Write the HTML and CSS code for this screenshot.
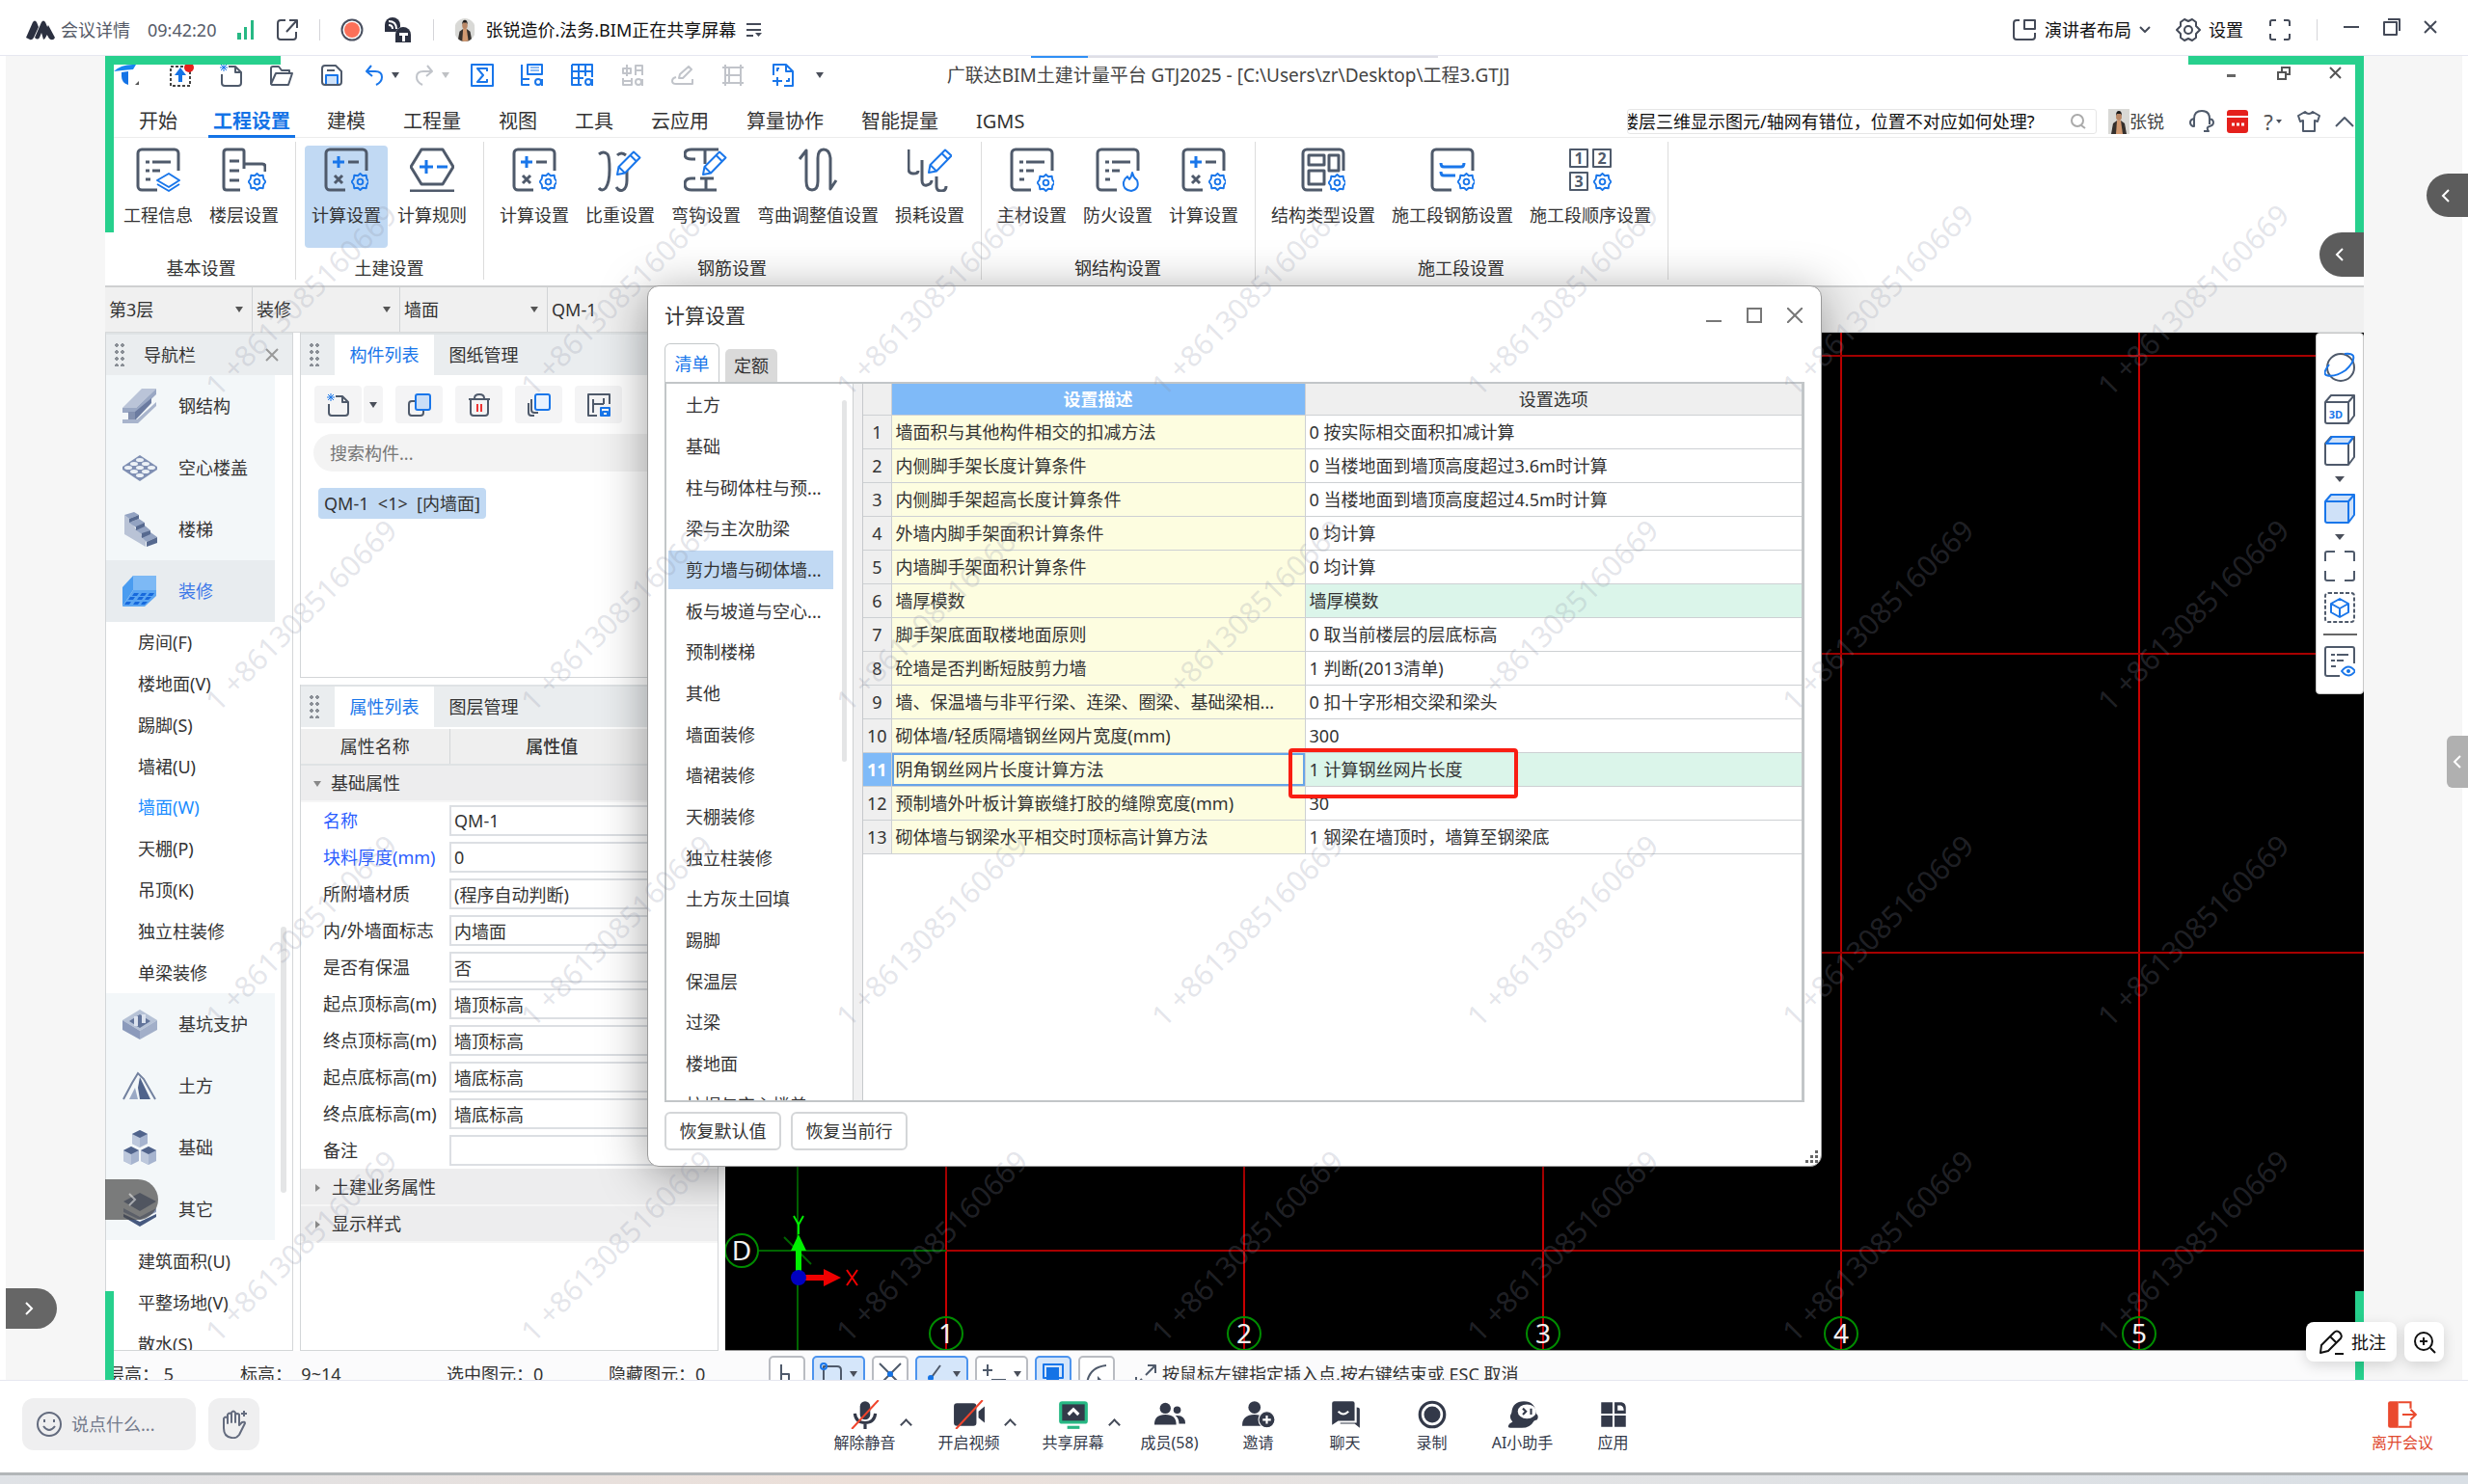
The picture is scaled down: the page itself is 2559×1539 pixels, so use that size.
FILE: index.html
```html
<!DOCTYPE html>
<html lang="zh-CN">
<head>
<meta charset="utf-8">
<title>会议 - 共享屏幕</title>
<link rel="stylesheet" href="styles.css">
</head>
<body>
<svg class="defs" aria-hidden="true">
  <defs>
    <symbol id="gear" viewBox="0 0 20 20"><path class="b2" d="M10 1l2.6 2.4 3.9-.5.6 3.9L19.4 10l-2.3 3.2-.6 3.9-3.9-.5L10 19l-2.6-2.4-3.9.5-.6-3.9L.6 10l2.3-3.2.6-3.9 3.9.5z"/><circle class="b2" cx="10" cy="10" r="3"/></symbol>
    <symbol id="pencil" viewBox="0 0 28 28"><path class="b2 wf" d="M2 26l1.500-8L19 2.500l6.500 6L10 24.500zM15.500 6l6.500 6.500M3.500 18l6.500 6.500"/></symbol>
    <symbol id="doc" viewBox="0 0 46 46"><path class="g3" d="M44 24V6a4 4 0 0 0-4-4H6a4 4 0 0 0-4 4v34a4 4 0 0 0 4 4h16"/></symbol>
    <symbol id="lines" viewBox="0 0 46 46"><path class="g3" d="M10 15h4M17 15h19M10 24h4M17 24h8M10 33h5"/></symbol>
    <symbol id="calc" viewBox="0 0 46 46"><use href="#doc"/><path class="g3" d="M25 15h11M11 29l8 8M19 29l-8 8"/><path class="b3" d="M9 15h12M15 9v12"/><use href="#gear" x="28" y="26" width="19" height="19"/></symbol>
    <symbol id="cube" viewBox="0 0 32 32"><path class="g2" d="M1 9h24v22H3a2 2 0 0 1-2-2zM1 9l6-7h24v21l-6 8M25 9l6-7"/></symbol>
    <symbol id="page" viewBox="0 0 24 24"><path class="g2" d="M9 3h7l6 6v11a3 3 0 0 1-3 3H5a3 3 0 0 1-3-3v-9M16 3v6h6"/><path class="b1" d="M1 1l6 6M7 1L1 7M4 0v8M0 4h8"/></symbol>
    <symbol id="full" viewBox="0 0 24 24"><path class="m2" d="M2 8V4a2 2 0 0 1 2-2h4M16 2h4a2 2 0 0 1 2 2v4M22 16v4a2 2 0 0 1-2 2h-4M8 22H4a2 2 0 0 1-2-2v-4"/></symbol>
    <symbol id="person" viewBox="0 0 22 26"><rect width="22" height="26" fill="#d9d9d6"/><path d="M3 26l2-11 4-3h4l4 3 2 11z" fill="#35302d"/><path d="M8 26l1-14h4l2 14z" fill="#d19a72"/><ellipse cx="11" cy="8" rx="3" ry="4" fill="#b98766"/><path d="M8 7q0-5 3-5t3 5l-1-2h-4z" fill="#1c1a1a"/></symbol>
  </defs>
</svg>

<header class="meeting-top">
  <div class="mt-group">
    <button class="plain brand"><svg width="30" height="22" viewBox="0 0 30 22"><path d="M0 19L7 3q2-3 4 0l2 5-5 11q-2 3-4 2zM9 19l7-16q2-3 4 0l3 7q-1 9-5 11l-2-7-2 5q-2 3-5 0zM20 13l3-7 7 13q-2 4-6 1z" fill="#2b3040"/></svg><span class="muted">会议详情</span></button>
    <span class="clock">09:42:20</span>
    <svg width="20" height="20" viewBox="0 0 20 20"><path d="M1 13h4v7H1zM8 7h3v13H8zM15 0h3v20h-3z" fill="#27b884"/></svg>
    <button class="plain" aria-label="弹出窗口"><svg width="24" height="24" viewBox="0 0 24 24"><path class="m2" d="M10 2H5a3 3 0 0 0-3 3v14a3 3 0 0 0 3 3h13a3 3 0 0 0 3-3v-5M14 2h8v8M21 3L11 14"/></svg></button>
    <span class="vr"></span>
    <button class="plain" aria-label="录制中"><svg width="24" height="24" viewBox="0 0 24 24"><circle cx="12" cy="12" r="10.500" fill="none" stroke="#4a5060" stroke-width="2"/><circle cx="12" cy="12" r="8" fill="#fb7059"/></svg></button>
    <button class="plain" aria-label="字幕"><svg width="30" height="28" viewBox="0 0 30 28"><path d="M1 9a8 8 0 0 1 16 0v7H1z" fill="#2b3040"/><circle cx="21" cy="19" r="9" fill="#fff"/><path d="M12 27v-8a8 8 0 0 1 16 0v8z" fill="#2b3040"/><path d="M5 5q8 0 8 8M5 9q4 0 4 4" fill="none" stroke="#fff" stroke-width="2"/><path d="M16 17h9v3h-3v6h-3v-6h-3z" fill="#fff"/></svg></button>
    <span class="vr"></span>
    <button class="plain sharing"><svg class="round" width="22" height="24"><use href="#person"/></svg><span>张锐造价.法务.BIM正在共享屏幕</span><svg width="18" height="16" viewBox="0 0 18 16"><path class="m2" d="M1 2h15M1 8h15M1 14h7"/><path d="M10 11h7l-3.500 4z" fill="#444a58"/></svg></button>
  </div>
  <div class="mt-group right">
    <button class="plain"><svg width="26" height="24" viewBox="0 0 26 24"><path class="m2" d="M8 2H5a3 3 0 0 0-3 3v14a3 3 0 0 0 3 3h16a3 3 0 0 0 3-3v-4M13 2h11v9H13z"/></svg><span>演讲者布局</span><svg width="12" height="10" viewBox="0 0 12 10"><path class="m2" d="M1 2l5 5 5-5"/></svg></button>
    <button class="plain"><svg width="26" height="26" viewBox="0 0 26 26"><path class="m2" d="M9 2l4 2 4-2 4 3v4l4 4-4 4v4l-4 3-4-2-4 2-4-3v-4l-4-4 4-4V5z"/><circle class="m2" cx="13" cy="13" r="4"/></svg><span>设置</span></button>
    <button class="plain" aria-label="全屏"><svg width="24" height="24"><use href="#full"/></svg></button>
    <span class="vr"></span>
    <div class="wins">
    <button class="plain" aria-label="最小化"><svg width="18" height="18" viewBox="0 0 18 18"><path class="m2" d="M1 9h16"/></svg></button>
    <button class="plain" aria-label="还原"><svg width="18" height="18" viewBox="0 0 18 18"><path class="m2" d="M1 4h13v13H1zM5 1h12v12"/></svg></button>
    <button class="plain" aria-label="关闭"><svg width="14" height="14" viewBox="0 0 14 14"><path class="m2" d="M1 1l12 12M13 1L1 13"/></svg></button>
    </div>
  </div>
</header>

<main class="stage">
 <section class="share">
  <div class="titlebar">
    <div class="quick">
      <span class="logo"><svg width="28" height="24" viewBox="0 0 28 24"><path d="M0 8Q8 0 23 1L20 6 9 7z" fill="#1685f0"/><path d="M8 9l7-1v14q-7-2-7-9z" fill="#1473e6"/><path d="M22 22h4v-4z" fill="#555"/></svg></span>
      <button class="plain q" aria-label="升级"><svg width="26" height="26" viewBox="0 0 26 26"><rect x="2" y="4" width="20" height="20" fill="none" stroke="#444" stroke-width="2" stroke-dasharray="3 2"/><path d="M12 5l6 8h-4v7h-4v-7H6z" fill="#1473e6"/><circle cx="21" cy="5" r="5" fill="#e5201c"/></svg></button>
      <button class="plain q" aria-label="新建"><svg width="24" height="24"><use href="#page"/></svg></button>
      <button class="plain q" aria-label="打开"><svg width="24" height="22" viewBox="0 0 24 22"><path class="g2" d="M1 20V4q0-2 2-2h6l3 4h8v4M1 20l5-11h17l-4 12H2z"/></svg></button>
      <button class="plain q" aria-label="保存"><svg width="22" height="22" viewBox="0 0 22 22"><path class="g2" d="M4 1h11l6 6v11q0 3-3 3H4q-3 0-3-3V4q0-3 3-3zM6 6h8"/><path class="b2" d="M5 20v-9h12v9" fill="#cfe3fb"/></svg></button>
      <button class="plain q" aria-label="撤销"><svg width="20" height="22" viewBox="0 0 20 22"><path class="b2" d="M7 1L2 7l6 5M3 7h8q7 0 7 6 0 5-6 8"/></svg><i class="tri"></i></button>
      <button class="plain q faded" aria-label="恢复"><svg width="20" height="22" viewBox="0 0 20 22"><path class="g2" d="M13 1l5 6-6 5M17 7H9q-7 0-7 6 0 5 6 8"/></svg><i class="tri"></i></button>
      <button class="plain q" aria-label="汇总计算"><svg width="24" height="24" viewBox="0 0 24 24"><path class="b2" d="M1 1h22v22H1zM17 8V5H7l6 7-6 7h10v-3"/></svg></button>
      <button class="plain q" aria-label="查看工程量"><svg width="24" height="24" viewBox="0 0 24 24"><path class="b2" d="M1 1v21h8M1 16h8M7 1h15v10H7z"/><path class="b1" d="M10 4h9M10 7h9"/><circle class="b2" cx="18" cy="19" r="3"/><path class="b2" d="M22 16v7"/></svg></button>
      <button class="plain q" aria-label="查看报表"><svg width="24" height="24" viewBox="0 0 24 24"><path class="b2" d="M1 1h21v13M1 1v21h10M1 8h21M1 15h12M8 1v21M15 1v12"/><circle class="b2" cx="18" cy="19" r="3"/><path class="b2" d="M22 16v7"/></svg></button>
      <button class="plain q faded" aria-label="查找"><svg width="24" height="24" viewBox="0 0 24 24"><path class="g2" d="M2 5h8v5H2zM6 1v12M15 12V2h7v10M15 7h7M2 15v7h9v-7M2 18h9"/><circle class="g2" cx="18" cy="19" r="3"/><path class="g2" d="M22 16v7"/></svg></button>
      <button class="plain q faded" aria-label="编辑"><svg width="24" height="20" viewBox="0 0 24 20"><path class="g2" d="M8 13l1-4 9-8 3 3-9 9zM5 12q-4 1-4 4t4 3h17v-5"/></svg></button>
      <button class="plain q faded" aria-label="区域"><svg width="24" height="24" viewBox="0 0 24 24"><path class="g2" d="M4 1v22M20 1v22M1 4h22M1 20h22M4 12h16M8 4v16"/></svg></button>
      <button class="plain q" aria-label="导出"><svg width="24" height="24" viewBox="0 0 24 24"><path class="b2" d="M2 12V1h13l7 7v15h-9M15 1v7h7M6 14v9M1 18h10"/><path class="b2" d="M8 5H6v3M15 18h3v-3"/></svg></button>
      <i class="tri wide"></i>
    </div>
    <div class="app-title">广联达BIM土建计量平台 GTJ2025 - [C:\Users\zr\Desktop\工程3.GTJ]</div>
    <div class="app-win">
      <button class="plain" aria-label="最小化"><svg width="14" height="14" viewBox="0 0 14 14"><path d="M2 8h9v3H2z" fill="#666"/></svg></button>
      <button class="plain" aria-label="还原"><svg width="14" height="14" viewBox="0 0 14 14"><path d="M1 6h8v7H1zM5 5V1h8v7H9" fill="none" stroke="#555" stroke-width="2"/></svg></button>
      <button class="plain" aria-label="关闭"><svg width="14" height="14" viewBox="0 0 14 14"><path d="M1 1l11 11M12 1L1 12" fill="none" stroke="#555" stroke-width="2"/></svg></button>
    </div>
  </div>

  <div class="tabrow">
    <nav class="tabs">
      <a href="#">开始</a><a href="#" class="on">工程设置</a><a href="#">建模</a><a href="#">工程量</a><a href="#">视图</a><a href="#">工具</a><a href="#">云应用</a><a href="#">算量协作</a><a href="#">智能提量</a><a href="#">IGMS</a>
    </nav>
    <div class="tabtools">
      <label class="ask"><input type="text" aria-label="搜索问题" value="楼层三维显示图元/轴网有错位，位置不对应如何处理?"><svg width="16" height="16" viewBox="0 0 16 16"><circle cx="7" cy="7" r="6" fill="none" stroke="#aaa" stroke-width="2"/><path d="M11 12l4 3" stroke="#aaa" stroke-width="2"/></svg></label>
      <button class="plain user"><svg width="22" height="26"><use href="#person"/></svg>张锐</button>
      <button class="plain t" aria-label="客服"><svg width="26" height="24" viewBox="0 0 26 24"><path class="g2" d="M4 17q-3-1-3-4t4-4v8zM5 9q0-8 8-8t8 8v6M21 9q4 1 4 4t-4 4-1 5h-5"/></svg></button>
      <button class="plain t" aria-label="日历"><svg width="24" height="24" viewBox="0 0 24 24"><rect x="1" width="22" height="24" rx="3" fill="#e5201c"/><path d="M1 7h22" stroke="#fff" stroke-width="2"/><path d="M6 15h3M11 15h3M16 15h3" stroke="#fff" stroke-width="3"/></svg></button>
      <button class="plain t help">?<i class="tri sm"></i></button>
      <button class="plain t" aria-label="皮肤"><svg width="24" height="22" viewBox="0 0 24 22"><path class="g2" d="M8 1L1 5l2 6 3-1v11h12V10l3 1 2-6-7-4q-4 4-8 0z"/></svg></button>
      <button class="plain t" aria-label="收起"><svg width="22" height="14" viewBox="0 0 22 14"><path class="g2" d="M2 12l9-9 9 9"/></svg></button>
    </div>
  </div>

  <div class="ribbon">
    <div class="rgroup"><div class="rbtns">
      <button><svg viewBox="0 0 46 46"><use href="#doc"/><use href="#lines"/><path class="b2" d="M22 34l12-7 11 7-11 7zM22 38l12 7 11-7"/></svg>工程信息</button>
      <button><svg viewBox="0 0 46 46"><path class="g3" d="M23 22V4q0-2-2-2H5Q2 2 2 5v36q0 3 3 3h14M8 14h10M8 24h10M8 34h10M23 17h19q3 0 3 3v5"/><use href="#gear" x="27" y="26" width="19" height="19"/></svg>楼层设置</button>
      </div><h3>基本设置</h3></div>
    <div class="rgroup"><div class="rbtns">
      <button class="on"><svg viewBox="0 0 46 46"><use href="#calc"/></svg>计算设置</button>
      <button><svg viewBox="0 0 46 46"><path class="g3" d="M12 2h22l11 18-11 18H12L1 20z"/><path class="b3" d="M10 20h14M17 13v14M28 20h11"/><path class="g3" d="M0 45h46"/></svg>计算规则</button>
      </div><h3>土建设置</h3></div>
    <div class="rgroup"><div class="rbtns">
      <button><svg viewBox="0 0 46 46"><use href="#calc"/></svg>计算设置</button>
      <button><svg viewBox="0 0 46 46"><path class="g3" d="M1 7q5-4 9 0 2 3 2 16t-4 19q-4 4-7 0M20 8q4-4 9 0M30 22v12q0 8-4 10t-7-3"/><use href="#pencil" x="18" y="2" width="28" height="28"/></svg>比重设置</button>
      <button><svg viewBox="0 0 46 46"><path class="g3" d="M36 2H8q-7 0-7 5t7 5h4M22 3v14M12 32H8q-7 0-7 6t7 6h26M23 32v12M17 32h14"/><use href="#pencil" x="18" y="2" width="28" height="28"/></svg>弯钩设置</button>
      <button><svg viewBox="0 0 46 46"><path class="g3" d="M4 12L11 3v32q0 9 6 9t6-9V11q0-9 6-9t7 9v32l6-9"/></svg>弯曲调整值设置</button>
      <button><svg viewBox="0 0 46 46"><path class="g3" d="M1 2v20q0 5 5 5t5-3M15 13v21q0 6 5 5t5-5M30 30v10q0 5 5 5t5-5"/><use href="#pencil" x="20" y="0" width="28" height="28"/></svg>损耗设置</button>
      </div><h3>钢筋设置</h3></div>
    <div class="rgroup"><div class="rbtns">
      <button><svg viewBox="0 0 46 46"><use href="#doc"/><use href="#lines"/><use href="#gear" x="28" y="27" width="19" height="19"/></svg>主材设置</button>
      <button><svg viewBox="0 0 46 46"><use href="#doc"/><use href="#lines"/><path class="b2" d="M38 26q1 5 5 8 3 9-6 11-9-1-8-9 1-4 4-6l2 3q2-2 3-7z"/></svg>防火设置</button>
      <button><svg viewBox="0 0 46 46"><use href="#calc"/></svg>计算设置</button>
      </div><h3>钢结构设置</h3></div>
    <div class="rgroup"><div class="rbtns">
      <button><svg viewBox="0 0 46 46"><use href="#doc"/><path class="g3" d="M8 8h16v10H8zM29 8h10v16H29zM8 24h16v14H8z"/><use href="#gear" x="28" y="27" width="19" height="19"/></svg>结构类型设置</button>
      <button><svg viewBox="0 0 46 46"><use href="#doc"/><path class="b3" d="M11 16q0 4 3 4h18q3 0 3-4M11 25q0 4 3 4h12"/><use href="#gear" x="28" y="26" width="19" height="19"/></svg>施工段钢筋设置</button>
      <button><svg viewBox="0 0 46 46"><path class="g2" d="M2 2h18v18H2zM26 2h18v18H26zM2 26h18v18H2z"/><g class="n"><text x="11" y="17">1</text><text x="35" y="17">2</text><text x="11" y="41">3</text></g><use href="#gear" x="26" y="26" width="19" height="19"/></svg>施工段顺序设置</button>
      </div><h3>施工段设置</h3></div>
  </div>

  <div class="selrow">
    <label class="sel"><select aria-label="楼层"><option>第3层</option></select></label>
    <label class="sel"><select aria-label="构件类别"><option>装修</option></select></label>
    <label class="sel"><select aria-label="构件类型"><option>墙面</option></select></label>
    <label class="sel"><select aria-label="构件"><option>QM-1</option></select></label>
  </div>

  <div class="work">
    <aside class="navp">
      <div class="phead"><i class="grip"></i><span class="ptitle">导航栏</span><button class="plain" aria-label="关闭导航栏"><svg width="14" height="14" viewBox="0 0 14 14"><path d="M1 1l12 12M13 1L1 13" fill="none" stroke="#999" stroke-width="2"/></svg></button></div>
      <div class="navlist">
        <a href="#" class="cat"><svg viewBox="0 0 36 36"><path d="M0 20L20 0h15L14 20z" fill="#bac4d8"/><path d="M0 20h14L35 0v6L15 25H0z" fill="#9aa8c4"/><path d="M6 24h7v9H6z" fill="#8391b0"/><path d="M13 24L30 10v5L13 33z" fill="#6b7ba0"/><path d="M0 32h15L35 14v4L16 36H0z" fill="#a8b4cc"/></svg>钢结构</a>
        <a href="#" class="cat"><svg viewBox="0 0 36 36"><path d="M0 17L18 5l18 12v3L18 32 0 20z" fill="#7f8fb3"/><g fill="#edf2f7"><ellipse cx="18" cy="10" rx="4" ry="2"/><ellipse cx="12" cy="14" rx="4" ry="2"/><ellipse cx="24" cy="14" rx="4" ry="2"/><ellipse cx="6" cy="18" rx="4" ry="2"/><ellipse cx="18" cy="18" rx="4" ry="2"/><ellipse cx="30" cy="18" rx="4" ry="2"/><ellipse cx="12" cy="22" rx="4" ry="2"/><ellipse cx="24" cy="22" rx="4" ry="2"/><ellipse cx="18" cy="26" rx="4" ry="2"/></g></svg>空心楼盖</a>
        <a href="#" class="cat"><svg viewBox="0 0 36 36"><path d="M2 3v20l22 13V26L14 18 7 7z" fill="#b9c3d6"/><path d="M2 3l10-3 5 3-10 4zM7 11l10-4 6 4-9 5zM13 18l10-4 6 5-9 4zM19 25l10-4 7 5-11 5z" fill="#93a3c2"/><path d="M7 7l10-4v4L7 11zM14 15l9-4v4l-9 4zM20 22l9-3v4l-9 4zM25 31l11-5v6l-11 4z" fill="#56698f"/></svg>楼梯</a>
        <a href="#" class="cat on"><svg viewBox="0 0 36 36"><path d="M11 2h24v15H11z" fill="#7db9f5"/><path d="M11 2L0 14v20l11-17z" fill="#4a9cf0"/><path d="M11 17h24v6L23 34H0z" fill="#5aa5f2"/><path d="M12 20h5l-2 3h-5zM20 20h5l-2 3h-5zM28 20h5l-2 3h-5zM8 24h5l-2 3H6zM17 24h5l-2 3h-5zM25 24h5l-3 3h-4zM4 29h5l-2 3H2zM13 29h5l-2 3h-5zM21 29h5l-3 3h-4z" fill="#1769dc"/></svg>装修</a>
        <div class="subs nine">
          <a href="#">房间(F)</a><a href="#">楼地面(V)</a><a href="#">踢脚(S)</a><a href="#">墙裙(U)</a><a href="#" class="on">墙面(W)</a><a href="#">天棚(P)</a><a href="#">吊顶(K)</a><a href="#">独立柱装修</a><a href="#">单梁装修</a>
        </div>
        <a href="#" class="cat"><svg viewBox="0 0 36 36"><path d="M0 14L18 3l18 11-18 11z" fill="#b6c2d6"/><path d="M0 14l18 11v9L0 24z" fill="#8b9abb"/><path d="M36 14L18 25v9l18-10z" fill="#a2afc9"/><path d="M7 15l11-7 11 7-11 7z" fill="#62749a"/><path d="M12 10h4v10h-4zM20 8h4v9h-4z" fill="#dbe2ee"/></svg>基坑支护</a>
        <a href="#" class="cat"><svg viewBox="0 0 36 36"><path d="M1 32L10 15l6-10 6 6 12 21" fill="none" stroke="#72819f" stroke-width="2"/><path d="M7 32l6-12 3 12z" fill="#9aa9c5"/><path d="M18 9l11 23H18l-2-12z" fill="#50638b"/></svg>土方</a>
        <a href="#" class="cat"><svg viewBox="0 0 36 36"><path d="M18 0l8 4v10l-8 4-8-4V4zM9 17l8 4v11l-8 4-8-4V21zM27 17l8 4v11l-8 4-8-4V21z" fill="#a6b4cf"/><path d="M18 8v10l-8-4V4zM9 25v11l-8-4V21zM27 25v11l-8-4V21z" fill="#bdc8dc"/><path d="M18 0l8 4-8 4-8-4zM9 17l8 4-8 4-8-4zM27 17l8 4-8 4-8-4z" fill="#50638b"/></svg>基础</a>
        <a href="#" class="cat"><svg viewBox="0 0 36 36"><path d="M18 1l17 9-17 10L1 10z" fill="#6a7a9d"/><path d="M1 17l17 9 17-9v4l-17 8-17-8z" fill="#8c9aba"/><path d="M1 23l17 8 17-8v3l-17 10L1 26z" fill="#46597f"/></svg>其它</a>
        <div class="subs">
          <a href="#">建筑面积(U)</a><a href="#">平整场地(V)</a><a href="#">散水(S)</a>
        </div>
      </div>
      <i class="navbar-thumb"></i>
    </aside>

    <div class="midcol">
      <section class="pane comp">
        <div class="phead"><i class="grip"></i><button class="ptab on">构件列表</button><button class="ptab">图纸管理</button></div>
        <div class="ctools">
          <button aria-label="新建"><svg width="24" height="24"><use href="#page"/></svg></button><button class="thin" aria-label="更多"><i class="tri"></i></button>
          <button aria-label="复制"><svg width="24" height="24" viewBox="0 0 24 24"><path class="g2" d="M7 8H4q-3 0-3 3v9q0 3 3 3h9q3 0 3-3v-2"/><rect class="b2" x="8" y="1" width="15" height="16" rx="2" fill="#c9def7"/></svg></button>
          <button aria-label="删除"><svg width="24" height="24" viewBox="0 0 24 24"><path class="g2" d="M1 6h22M7 5q0-4 5-4t5 4M3 6v14q0 3 3 3h12q3 0 3-3V6"/><path d="M10 11v8M14 11v8" stroke="#e33" stroke-width="2"/></svg></button>
          <button aria-label="层间复制"><svg width="24" height="24" viewBox="0 0 24 24"><path class="g2" d="M1 10v10q0 3 3 3h3M4 6v11q0 3 3 3h4"/><rect class="b2" x="8" y="1" width="15" height="16" rx="2" fill="#e9f3ff"/></svg></button>
          <button aria-label="存档"><svg width="24" height="24" viewBox="0 0 24 24"><path class="g2" d="M10 23H1V1h22v10M6 6v14M6 11h11M17 5v6"/><path class="b2" d="M14 15h9v8h-9zM16 23v-4h5v4"/></svg></button>
        </div>
        <input class="csearch" type="text" aria-label="搜索构件" placeholder="搜索构件...">
        <a href="#" class="citem">QM-1 &nbsp;&lt;1&gt; &nbsp;[内墙面]</a>
      </section>

      <section class="pane prop">
        <div class="phead"><i class="grip"></i><button class="ptab on">属性列表</button><button class="ptab">图层管理</button></div>
        <table class="ptable">
          <thead><tr><th>属性名称</th><th class="val">属性值</th></tr></thead>
          <tbody>
            <tr class="sec"><th colspan="2"><i class="tri"></i>基础属性</th></tr>
            <tr class="blue"><th><label for="p1">名称</label></th><td><input id="p1" value="QM-1"></td></tr>
            <tr class="blue"><th><label for="p2">块料厚度(mm)</label></th><td><input id="p2" value="0"></td></tr>
            <tr><th><label for="p3">所附墙材质</label></th><td><input id="p3" value="(程序自动判断)"></td></tr>
            <tr><th><label for="p4">内/外墙面标志</label></th><td><input id="p4" value="内墙面"></td></tr>
            <tr><th><label for="p5">是否有保温</label></th><td><input id="p5" value="否"></td></tr>
            <tr><th><label for="p6">起点顶标高(m)</label></th><td><input id="p6" value="墙顶标高"></td></tr>
            <tr><th><label for="p7">终点顶标高(m)</label></th><td><input id="p7" value="墙顶标高"></td></tr>
            <tr><th><label for="p8">起点底标高(m)</label></th><td><input id="p8" value="墙底标高"></td></tr>
            <tr><th><label for="p9">终点底标高(m)</label></th><td><input id="p9" value="墙底标高"></td></tr>
            <tr><th><label for="p10">备注</label></th><td><input id="p10" value=""></td></tr>
            <tr class="sec"><th colspan="2"><i class="tri side"></i>土建业务属性</th></tr>
            <tr class="sec"><th colspan="2"><i class="tri side"></i>显示样式</th></tr>
          </tbody>
        </table>
      </section>
    </div>

    <div class="canvas">
      <svg class="grid" width="100%" height="100%">
        <g stroke="#a80000" stroke-width="2">
          <path d="M229 0v1056M538 0v1056M848 0v1056M1157 0v1056M1466 0v1056" stroke="#c80000"/>
          <path d="M0 24h1700M0 333h1700M0 643h1700M229 952h1471"/>
        </g>
        <path d="M75 0v1056M35 952h194" stroke="#006400" stroke-width="2"/>
        <path d="M61 938l28 28" stroke="#006400" stroke-width="2"/>
        <g fill="none" stroke="#008c00" stroke-width="2">
          <circle cx="229" cy="1038" r="17"/><circle cx="538" cy="1038" r="17"/><circle cx="848" cy="1038" r="17"/><circle cx="1157" cy="1038" r="17"/><circle cx="1466" cy="1038" r="17"/><circle cx="17" cy="952" r="17"/>
        </g>
        <g class="axis"><text x="229" y="1048">1</text><text x="538" y="1048">2</text><text x="848" y="1048">3</text><text x="1157" y="1048">4</text><text x="1466" y="1048">5</text><text x="17" y="962">D</text></g>
        <path d="M73 980v-28h-5l8-17 8 17h-5v28z" fill="#00f000"/>
        <path d="M80 977h22v-6l18 9-18 9v-6H80z" fill="#f00000"/>
        <circle cx="76" cy="980" r="8" fill="#0000c0"/>
        <path d="M71 916l5 9 5-9M76 925v10" fill="none" stroke="#00f000" stroke-width="2"/>
        <path d="M126 972l11 16M137 972l-11 16" stroke="#f00000" stroke-width="2"/>
      </svg>
      <div class="viewbar">
        <button aria-label="动态观察"><svg viewBox="0 0 32 32"><circle class="g2" cx="17" cy="16" r="14"/><path class="b2" d="M5 13Q-2 22 2 24q8 3 20-5Q32 10 30 4q-2-3-9-2"/></svg></button>
        <button aria-label="三维"><svg viewBox="0 0 32 32"><use href="#cube"/><text class="d3" x="12" y="26">3D</text></svg></button>
        <button aria-label="俯视"><svg viewBox="0 0 32 32"><use href="#cube"/><path class="b2" d="M2 9l6-7h22l-5 7z" fill="#cfe1f8"/></svg></button>
        <i class="tri big"></i>
        <button aria-label="实体显示"><svg viewBox="0 0 32 32"><path class="b2" d="M1 9h24v22H3a2 2 0 0 1-2-2zM1 9l6-7h24v21l-6 8M25 9l6-7" fill="#cfe1f8"/></svg></button>
        <i class="tri big"></i>
        <button aria-label="全屏"><svg viewBox="0 0 32 32"><path class="g2" d="M1 11V3q0-2 2-2h8M21 1h8q2 0 2 2v8M31 21v8q0 2-2 2h-8M11 31H3q-2 0-2-2v-8"/></svg></button>
        <button aria-label="局部三维"><svg viewBox="0 0 32 32"><rect class="g2" x="1" y="1" width="30" height="30" rx="3" stroke-dasharray="4 2"/><path class="b2" d="M16 7l9 5v9l-9 5-9-5v-9zM7 12l9 5 9-5M16 17v9"/></svg></button>
        <hr>
        <button aria-label="显示设置"><svg viewBox="0 0 32 32"><path class="g2" d="M31 18V3q0-2-2-2H3Q1 1 1 3v26q0 2 2 2h13M7 9h4M13 9h12M7 15h4M13 15h7M7 21h5"/><path class="b2" d="M18 26q7-9 14 0-7 9-14 0z"/><circle cx="25" cy="26" r="2" fill="#1473e6"/></svg></button>
      </div>
    </div>
  </div>

  <div class="status">
    <span class="s1">层高： 5</span><span class="s2">标高： &nbsp;9~14</span><span class="s3">选中图元：0</span><span class="s4">隐藏图元：0</span>
    <div class="snap">
      <button aria-label="正交"><svg width="20" height="24" viewBox="0 0 20 24"><path class="g2" d="M4 2v20M4 12h8v10"/></svg></button>
      <button class="on wide" aria-label="矩形"><svg width="24" height="24" viewBox="0 0 24 24"><path class="g2" d="M4 22V4h14q4 0 4 4v14"/><circle class="b2" cx="4" cy="4" r="3"/></svg><i class="tri"></i></button>
      <button aria-label="交点"><svg width="24" height="24" viewBox="0 0 24 24"><path class="g2" d="M1 1l22 22M23 1L1 23"/><circle cx="12" cy="12" r="3" fill="#1473e6"/></svg></button>
      <button class="on wide" aria-label="中点"><svg width="24" height="24" viewBox="0 0 24 24"><path class="g2" d="M4 22L18 3"/><circle cx="8" cy="16" r="3" fill="#1473e6"/></svg><i class="tri"></i></button>
      <button class="wide" aria-label="偏移"><svg width="26" height="24" viewBox="0 0 26 24"><path class="g2" d="M1 8h10M6 2v12M10 18h15M10 22h15"/></svg><i class="tri"></i></button>
      <button class="on" aria-label="选择"><svg width="24" height="24" viewBox="0 0 24 24"><path class="b2" d="M2 2h20v14H2z"/><path d="M5 5h13v14H5z" fill="#1473e6"/></svg></button>
      <button aria-label="弧"><svg width="24" height="24" viewBox="0 0 24 24"><path class="g2" d="M2 22Q4 5 22 3"/><path d="M13 14l8 8h-8z" fill="#4f5a6b"/></svg></button>
    </div>
    <span class="hint"><svg width="26" height="24" viewBox="0 0 26 24"><path class="g2" d="M15 3h8v8M23 3L13 13M3 15v8h7M3 23l6-6"/></svg>按鼠标左键指定插入点,按右键结束或 ESC 取消</span>
  </div>

  <section class="dialog" role="dialog" aria-label="计算设置">
    <div class="dhead"><h2>计算设置</h2>
      <div class="dwin">
        <button class="plain" aria-label="最小化"><svg width="16" height="16" viewBox="0 0 16 16"><path d="M0 14h16" stroke="#777" stroke-width="2"/></svg></button>
        <button class="plain" aria-label="最大化"><svg width="16" height="16" viewBox="0 0 16 16"><path d="M1 1h14v14H1z" fill="none" stroke="#777" stroke-width="2"/></svg></button>
        <button class="plain" aria-label="关闭"><svg width="16" height="16" viewBox="0 0 16 16"><path d="M0 0l16 16M16 0L0 16" stroke="#777" stroke-width="2"/></svg></button>
      </div>
    </div>
    <div class="dtabs"><button class="on">清单</button><button>定额</button></div>
    <div class="dbody">
      <div class="dlist">
        <div class="ditems">
          <a href="#">土方</a><a href="#">基础</a><a href="#">柱与砌体柱与预...</a><a href="#">梁与主次肋梁</a><a href="#" class="on">剪力墙与砌体墙...</a><a href="#">板与坡道与空心...</a><a href="#">预制楼梯</a><a href="#">其他</a><a href="#">墙面装修</a><a href="#">墙裙装修</a><a href="#">天棚装修</a><a href="#">独立柱装修</a><a href="#">土方灰土回填</a><a href="#">踢脚</a><a href="#">保温层</a><a href="#">过梁</a><a href="#">楼地面</a><a href="#">柱帽与空心楼盖</a>
        </div>
        <i class="dthumb"></i>
      </div>
      <div class="dtablewrap">
        <table class="dtable">
          <colgroup><col class="c1"><col class="c2"><col></colgroup>
          <thead><tr><th></th><th class="hl">设置描述</th><th>设置选项</th></tr></thead>
          <tbody>
            <tr><th>1</th><td class="y">墙面积与其他构件相交的扣减方法</td><td>0 按实际相交面积扣减计算</td></tr>
            <tr><th>2</th><td class="y">内侧脚手架长度计算条件</td><td>0 当楼地面到墙顶高度超过3.6m时计算</td></tr>
            <tr><th>3</th><td class="y">内侧脚手架超高长度计算条件</td><td>0 当楼地面到墙顶高度超过4.5m时计算</td></tr>
            <tr><th>4</th><td class="y">外墙内脚手架面积计算条件</td><td>0 均计算</td></tr>
            <tr><th>5</th><td class="y">内墙脚手架面积计算条件</td><td>0 均计算</td></tr>
            <tr><th>6</th><td class="y">墙厚模数</td><td class="gr">墙厚模数</td></tr>
            <tr><th>7</th><td class="y">脚手架底面取楼地面原则</td><td>0 取当前楼层的层底标高</td></tr>
            <tr><th>8</th><td class="y">砼墙是否判断短肢剪力墙</td><td>1 判断(2013清单)</td></tr>
            <tr><th>9</th><td class="y">墙、保温墙与非平行梁、连梁、圈梁、基础梁相...</td><td>0 扣十字形相交梁和梁头</td></tr>
            <tr><th>10</th><td class="y">砌体墙/轻质隔墙钢丝网片宽度(mm)</td><td>300</td></tr>
            <tr class="cur"><th>11</th><td class="y">阴角钢丝网片长度计算方法</td><td class="gr">1 计算钢丝网片长度<i class="redbox"></i></td></tr>
            <tr><th>12</th><td class="y">预制墙外叶板计算嵌缝打胶的缝隙宽度(mm)</td><td>30</td></tr>
            <tr><th>13</th><td class="y">砌体墙与钢梁水平相交时顶标高计算方法</td><td>1 钢梁在墙顶时，墙算至钢梁底</td></tr>
          </tbody>
        </table>
      </div>
    </div>
    <div class="dfoot"><button>恢复默认值</button><button>恢复当前行</button></div>
    <svg class="sizer" width="14" height="14" viewBox="0 0 14 14"><path d="M11 1h3v3h-3zM6 6h3v3H6zM11 6h3v3h-3zM1 11h3v3H1zM6 11h3v3H6zM11 11h3v3h-3z" fill="#666"/></svg>
  </section>

  <div class="marks" aria-hidden="true">
    <span>1 +8613085160669</span><span>1 +8613085160669</span><span>1 +8613085160669</span><span>1 +8613085160669</span><span>1 +8613085160669</span><span>1 +8613085160669</span><span>1 +8613085160669</span>
    <span>1 +8613085160669</span><span>1 +8613085160669</span><span>1 +8613085160669</span><span>1 +8613085160669</span><span>1 +8613085160669</span><span>1 +8613085160669</span><span>1 +8613085160669</span>
    <span>1 +8613085160669</span><span>1 +8613085160669</span><span>1 +8613085160669</span><span>1 +8613085160669</span><span>1 +8613085160669</span><span>1 +8613085160669</span><span>1 +8613085160669</span>
    <span>1 +8613085160669</span><span>1 +8613085160669</span><span>1 +8613085160669</span><span>1 +8613085160669</span><span>1 +8613085160669</span><span>1 +8613085160669</span><span>1 +8613085160669</span>
  </div>
  <i class="corner tl"></i><i class="corner tr"></i><i class="corner bl"></i><i class="corner br"></i>
  <i class="pull"></i>
  <button class="handle in-left" aria-label="展开"><svg width="10" height="16" viewBox="0 0 10 16"><path d="M2 2l6 6-6 6"/></svg></button>
  <button class="handle in-right" aria-label="收起"><svg width="10" height="16" viewBox="0 0 10 16"><path d="M8 2L2 8l6 6"/></svg></button>
 </section>
 <button class="handle out-left" aria-label="展开"><svg width="10" height="16" viewBox="0 0 10 16"><path d="M2 2l6 6-6 6"/></svg></button>
 <button class="handle out-right" aria-label="收起"><svg width="10" height="16" viewBox="0 0 10 16"><path d="M8 2L2 8l6 6"/></svg></button>
 <button class="handle side" aria-label="侧栏"><svg width="10" height="16" viewBox="0 0 10 16"><path d="M8 2L2 8l6 6"/></svg></button>
 <div class="float">
   <button><svg width="26" height="26" viewBox="0 0 26 26"><path class="k2" d="M2 24l1-8L16 3q3-3 6 0t1 6L10 22zM12 7l7 7M17 25h9"/></svg>批注</button>
   <button class="sq" aria-label="放大"><svg width="24" height="24" viewBox="0 0 24 24"><circle class="k2" cx="11" cy="11" r="9"/><path class="k2" d="M11 7v8M7 11h8M18 18l5 5"/></svg></button>
 </div>
</main>

<footer class="meeting-bottom">
  <div class="chat">
    <label class="say"><svg width="28" height="28" viewBox="0 0 28 28"><circle class="s2" cx="14" cy="14" r="12"/><path class="s2" d="M9 9v3M19 9v3M8 16q6 8 12 0"/></svg><input type="text" aria-label="聊天" placeholder="说点什么..."></label>
    <button class="hand" aria-label="举手"><svg width="28" height="30" viewBox="0 0 28 30"><path class="s2" d="M3 19V9q2-3 4 0v5V5q2-3 4 0v8V3q2-3 4 0v10V5q2-2 4 0v11l3-3q3-1 3 1l-6 12q-3 4-8 3-8-1-8-10z"/><path class="s2" d="M24 1v6M21 4h6"/></svg></button>
  </div>
  <div class="mtools">
    <button class="w1"><svg viewBox="0 0 32 28"><path d="M11 6a5 5 0 0 1 10 0v8a5 5 0 0 1-10 0z" fill="#333949"/><path class="d2" d="M6 13q1 9 10 9t10-9M16 22v6"/><path class="r2" d="M29 0L3 28"/></svg>解除静音</button><i class="caret"></i>
    <button class="w1"><svg viewBox="0 0 32 28"><path d="M1 6q0-3 3-3h16q3 0 3 3v16q0 3-3 3H4q-3 0-3-3zM25 11l6-5v16l-6-5z" fill="#333949"/><path class="r2" d="M29 0L3 28"/></svg>开启视频</button><i class="caret"></i>
    <button class="w1"><svg viewBox="0 0 32 28"><path d="M2 4q0-3 3-3h22q3 0 3 3v16q0 3-3 3H5q-3 0-3-3z" fill="#27b884"/><path d="M5 4h22v16H5z" fill="#333949"/><path d="M10 25h12v3H10z" fill="#27b884"/><path d="M11 14l5-5 5 5" fill="none" stroke="#fff" stroke-width="3"/></svg>共享屏幕</button><i class="caret last"></i>
    <button class="w2"><svg viewBox="0 0 36 28"><circle cx="13" cy="7" r="6" fill="#333949"/><circle cx="26" cy="9" r="4" fill="#333949"/><path d="M1 25q0-11 12-11t12 11zM26 15q9 0 9 9h-7q0-6-4-9z" fill="#333949"/></svg>成员(58)</button>
    <button class="w3"><svg viewBox="0 0 32 28"><circle cx="12" cy="7" r="6" fill="#333949"/><path d="M0 25q0-11 12-11t7 11z" fill="#333949"/><circle cx="24" cy="19" r="8" fill="#333949" stroke="#fff"/><path d="M24 15v8M20 19h8" stroke="#fff" stroke-width="2"/></svg>邀请</button>
    <button class="w3"><svg viewBox="0 0 32 28"><path d="M3 3q0-2 2-2h18q2 0 2 2v17H9l-6 4z" fill="#333949"/><path d="M27 7q3 0 3 2v18l-5-4H11v-1h16z" fill="#333949"/><path d="M9 11q5 5 10 0" fill="none" stroke="#fff" stroke-width="2"/></svg>聊天</button>
    <button class="w3"><svg viewBox="0 0 32 28"><circle class="d2" cx="16" cy="14" r="12"/><circle cx="16" cy="14" r="8" fill="#333949"/></svg>录制</button>
    <button class="w4"><svg viewBox="0 0 32 28"><path d="M5 12Q6 1 17 1t12 12q3 2 1 6l-3 1q-4 7-12 7H4q-4 0-1-4l3-2q-4-4-1-9z" fill="#333949"/><ellipse cx="20" cy="11" rx="9" ry="7" fill="#fff"/><path d="M16 8l3 3-3 3M24 8v6" fill="none" stroke="#333949" stroke-width="2"/></svg>AI小助手</button>
    <button class="w3"><svg viewBox="0 0 32 28"><path d="M4 2h11v11H4zM17 2h7q4 1 4 5v6H17zM4 15h11v11H4zM17 15h11v11H17z" fill="#333949"/><path d="M20 5h3q3 1 3 5h-6z" fill="#fff"/></svg>应用</button>
  </div>
  <button class="leave"><svg viewBox="0 0 32 28"><path d="M2 3q0-2 2-2h8v26H4q-2 0-2-2z" fill="#ea4a2e"/><path d="M12 2h12v6M12 26h12v-6M16 14h13M24 9l5 5-5 5" fill="none" stroke="#ea4a2e" stroke-width="2"/></svg>离开会议</button>
</footer>
<div class="desk"></div>
</body>
</html>
```
FILE: styles.css
```css
* { box-sizing: border-box; }
body {
  margin: 0; height: 100vh; overflow: hidden; background: #fff;
  display: flex; flex-direction: column;
  font: 18px/24px "Noto Sans", "Noto Sans CJK SC", sans-serif; color: #333;
}
button, input, select { font: inherit; color: inherit; margin: 0; }
button { background: none; border: 0; padding: 0; white-space: nowrap; cursor: pointer; }
a { color: inherit; text-decoration: none; white-space: nowrap; }
h2, h3 { margin: 0; font-weight: 400; }
svg { flex: none; }
.defs { position: absolute; width: 0; height: 0; }
.plain { display: flex; align-items: center; justify-content: center; }

/* icon strokes */
.g2, .g3, .b1, .b2, .b3, .m2, .k2, .s2, .d2, .r2 { stroke-width: 2; stroke-linejoin: round; }
.g2, .g3 { stroke: #4f5a6b; }
.b1, .b2, .b3 { stroke: #1976ea; }
.b1 { stroke-width: 1; }
.g3, .b3 { stroke-width: 3; }
.m2 { stroke: #444a58; }
.k2 { stroke: #111; }
.s2 { stroke: #636b7e; }
.d2 { stroke: #333949; stroke-width: 3; }
.r2 { stroke: #f0442c; }
.g2, .g3, .m2, .k2, .s2, .d2, .b3, .b1, .b2:not([fill]) { fill: none; }
.wf.b2 { fill: #fff; }

.tri { flex: none; width: 0; height: 0; border: 4px solid transparent; border-top: 6px solid #4a4f5a; border-bottom: 0; }
.tri.side { border: 4px solid transparent; border-left: 5px solid #888; border-right: 0; }
.tri.big { border-width: 6px 5px 0; }
.tri.sm { border-width: 4px 3px 0; }

/* meeting header */
.meeting-top { flex: none; height: 58px; display: flex; justify-content: space-between; padding: 0 32px 0 27px; border-bottom: 1px solid #e6e7f0; }
.mt-group { display: flex; align-items: center; padding-top: 4px; gap: 21px; color: #111; }
.mt-group .plain { gap: 8px; }
.mt-group .brand { gap: 6px; margin-right: -3px; }
.mt-group.right { gap: 26px; }
.wins { display: flex; gap: 24px; padding-bottom: 6px; }
.muted, .clock { color: #555b68; }
.vr { width: 1px; height: 22px; background: #d5d5d9; }
.mt-group .sharing { gap: 10px; color: #111; }
.round { border-radius: 50%; }

/* stage */
.stage { flex: 1; min-height: 0; position: relative; margin: 0 6px; padding: 0 102px 0 103px; background: #f6f6f6; display: flex; }
.share { flex: 1; min-width: 0; position: relative; overflow: hidden; background: #fff; display: flex; flex-direction: column; }
.corner { position: absolute; width: 182px; height: 183px; border: 0 solid #27d08d; }
.tl { left: 0; top: 0; border-width: 9px 0 0 9px; }
.tr { right: 0; top: 0; border-width: 9px 9px 0 0; }
.bl { left: 0; bottom: 0; width: 9px; height: 92px; background: #27d08d; }
.br { right: 0; bottom: 0; width: 9px; height: 92px; background: #27d08d; }
.pull { position: absolute; top: 0; left: 41%; width: 18%; height: 2px; background: linear-gradient(90deg, #2f8ff5 14%, #dfdfe6 14%); }

.titlebar { flex: none; height: 40px; display: grid; grid-template-columns: 1fr auto 1fr; align-items: center; padding: 0 22px 0 9px; }
.quick { display: flex; align-items: center; width: 0; }
.logo { flex: none; width: 44px; display: flex; }
.q { flex: none; width: 52px; gap: 8px; }
.faded { opacity: .35; }
.quick .wide { margin-left: 8px; }
.app-title { white-space: pre; color: #444; font-size: 19px; }
.app-win { display: flex; justify-content: flex-end; gap: 40px; padding-bottom: 4px; }

.tabrow { flex: none; height: 45px; display: flex; justify-content: space-between; border-bottom: 1px solid #ececec; padding: 0 2px 0 29px; }
.tabs { display: flex; gap: 27px; }
.tabs a { font-size: 20px; height: 45px; padding: 6px 6px 0; line-height: 44px; }
.tabs .on { color: #1473e6; font-weight: 700; border-bottom: 3px solid #1473e6; padding: 6px 5px 0; margin: 0 0 0 -1px; }
.tabtools { display: flex; align-items: center; padding-top: 12px; }
.ask { width: 487px; height: 26px; display: flex; align-items: center; border: 1px solid #e6e6e6; border-radius: 3px; padding-right: 10px; margin-right: 12px; }
.ask input { flex: 1; min-width: 0; border: 0; padding: 0; outline: 0; background: none; color: #111; text-indent: -7px; height: 24px; }
.user { margin-right: 20px; color: #444; }
.t { width: 37px; }
.help { font-size: 22px; color: #555; gap: 3px; }

.ribbon { flex: none; height: 153px; display: flex; }
.rgroup { display: flex; flex-direction: column; align-items: center; justify-content: space-between; padding: 8px 11px 6px 9px; position: relative; }
.rgroup:first-child { padding-left: 12px; }
.rgroup::after { content: ""; position: absolute; right: 0; top: 4px; bottom: 6px; width: 1px; background: #dcdcdc; }
.rbtns { display: flex; gap: 3px; }
.rbtns button { height: 106px; padding: 2px 7px 0; border-radius: 4px; display: flex; flex-direction: column; align-items: center; gap: 12px; line-height: 24px; }
.rbtns .on { background: #c1d9f3; }
.rbtns svg { width: 46px; height: 46px; }
.n text { font: 700 16px "Noto Sans", sans-serif; fill: #4f5a6b; text-anchor: middle; }
.rgroup h3 { font-size: 18px; line-height: 24px; }

.selrow { flex: none; height: 49px; display: flex; background: #f0f0f0; border-top: 2px solid #cfd0d1; border-bottom: 1px solid #d8dadb; }
.sel { width: 153px; display: flex; align-items: center; padding: 0 9px 0 4px; border-right: 1px solid #d2d4d6; position: relative; }
.sel select { flex: 1; appearance: none; border: 0; background: none; padding: 0; outline: 0; }
.sel::after { content: ""; border: 4px solid transparent; border-top: 6px solid #555; border-bottom: 0; }

/* work area */
.work { flex: 1; min-height: 0; display: flex; gap: 7px; }
.navp { flex: none; width: 195px; border: solid #d3d6d8; border-width: 0 1px 1px; position: relative; display: flex; flex-direction: column; overflow: hidden; }
.phead { flex: none; height: 44px; display: flex; align-items: stretch; background: #eaedef; border-top: 2px solid #dfe3e5; }
.grip { align-self: center; width: 10px; height: 24px; margin: 0 16px 0 9px; background: radial-gradient(circle at 2px 2px, #8a8f96 2px, transparent 2px) 0 0 / 6px 7px; }
.ptitle { flex: 1; line-height: 43px; padding-left: 4px; }
.navp .phead .plain { width: 42px; }
.navlist { flex: 1; min-height: 0; overflow: hidden; }
.cat { display: flex; align-items: center; gap: 22px; height: 64px; width: 175px; padding-left: 17px; background: #f3f7f9; }
.cat svg { width: 36px; height: 36px; }
.cat.on { background: #e8ecef; color: #3c78e8; }
.subs { display: grid; grid-auto-rows: 43px; padding-left: 33px; align-items: center; }
.nine { height: 385px; grid-auto-rows: 1fr; }
.subs .on { color: #1a8cff; }
.navbar-thumb { position: absolute; right: 6px; top: 616px; width: 6px; height: 276px; border-radius: 3px; background: #e4e5e6; }

.midcol { flex: none; width: 434px; display: flex; flex-direction: column; gap: 7px; }
.pane { border: 1px solid #d3d6d8; border-top: 0; }
.comp { flex: none; height: 358px; display: flex; flex-direction: column; align-items: flex-start; }
.comp .phead, .prop .phead { width: 100%; }
.ptab { padding: 0 15px; width: 103px; }
.ptab.on { background: #fff; color: #1976ea; }
.ctools { display: flex; padding: 11px 0 11px 14px; gap: 13px; }
.ctools button { width: 49px; height: 39px; background: #f4f4f5; border-radius: 4px; display: flex; align-items: center; justify-content: center; }
.ctools .thin { width: 20px; margin-left: -11px; }
.csearch { width: 400px; height: 39px; margin-left: 13px; border: 0; border-radius: 20px; background: #f3f3f3; padding: 0 17px; }
.csearch::placeholder { color: #777; opacity: 1; }
.citem { margin: 17px 0 0 18px; background: #c1d9f3; border-radius: 4px; padding: 4px 6px; }

.prop { flex: 1; min-height: 0; overflow: hidden; }
.ptable { width: 100%; border-collapse: collapse; table-layout: fixed; margin-top: 2px; }
.ptable th { font-weight: 400; text-align: left; padding: 0 0 0 23px; height: 38px; white-space: nowrap; }
.ptable thead th { width: 154px; text-align: center; padding: 0; background: #efefef; border-right: 1px solid #d3d6d8; border-bottom: 2px solid #dfe2e4; height: 37px; }
.ptable thead .val { width: auto; font-weight: 500; padding-right: 65px; }
.ptable td { padding: 3px 0 3px 0; }
.ptable td input { display: block; width: 100%; height: 32px; border: 2px solid #dcdfe3; padding: 0 3px; outline: 0; background: #fff; }
.ptable .sec th { background: #ededee; padding-left: 13px; border-bottom: 2px solid #f6f6f6; height: 38px; }
.sec .tri { display: inline-block; width: 0; margin-right: 10px; vertical-align: 3px; border-top-color: #888; }
.sec .side { border-top-color: transparent; margin: 0 12px 0 2px; vertical-align: 2px; }
.blue th { color: #2b5dff; }

.canvas { flex: 1; min-width: 0; background: #000; position: relative; overflow: hidden; border-bottom: 1px solid #999; }
.grid { display: block; position: absolute; inset: 0; }
.axis text { font: 28px "Noto Sans", sans-serif; fill: #f2f2f2; text-anchor: middle; }
.viewbar { position: absolute; right: 0; top: 0; width: 50px; height: 375px; background: #fff; border: 1px solid #c8c8c8; border-radius: 4px; padding-top: 19px; display: flex; flex-direction: column; align-items: center; gap: 11px; }
.viewbar svg { display: block; width: 32px; height: 32px; }
.viewbar hr { width: 35px; border: 0; border-top: 2px solid #666; margin: 0; }
.d3 { font: 700 11px "Noto Sans", sans-serif; fill: #1976ea; text-anchor: middle; }

.status { flex: none; height: 30px; display: flex; align-items: flex-start; background: #fbfbfc; overflow: hidden; white-space: pre; }
.status > span { padding-top: 12px; }
.s1 { width: 140px; padding-left: 2px; }
.s2 { width: 214px; }
.s3 { width: 168px; }
.s4 { width: 166px; }
.snap { display: flex; gap: 7px; padding-top: 5px; margin-right: 19px; }
.snap button { width: 38px; height: 38px; border: 2px solid #b9bcc2; border-radius: 5px; background: #fff; display: flex; align-items: center; justify-content: center; gap: 7px; }
.snap .wide { width: 55px; }
.snap .on { background: #d5e6fa; border-color: #4d94ee; }
.status .hint { display: flex; align-items: center; gap: 4px; padding-top: 12px; }

/* dialog window */
.dialog { position: absolute; left: 24%; right: 24%; top: 238px; bottom: 221px; background: #fff; border: 1px solid #9b9b9b; border-radius: 12px; box-shadow: 0 8px 50px rgba(0,0,0,.38); padding: 0 17px 16px 17px; display: flex; flex-direction: column; }
.dhead { flex: none; height: 59px; display: flex; justify-content: space-between; align-items: center; }
.dhead h2 { font-size: 21px; line-height: 28px; }
.dwin { display: flex; gap: 26px; padding-right: 2px; }
.dtabs { flex: none; height: 40px; display: flex; gap: 6px; align-items: flex-end; }
.dtabs button { width: 54px; height: 34px; background: #dadada; border-radius: 5px 5px 0 0; }
.dtabs .on { width: 57px; height: 40px; background: #fff; color: #1976ea; border: 1px solid #c4c8ca; border-bottom: 0; border-radius: 6px 6px 0 0; }
.dbody { flex: 1; min-height: 0; display: flex; gap: 9px; border: solid #c2c6c8; border-width: 2px 3px 2px 2px; background: #f0f0f1; }
.dlist { flex: none; width: 194px; background: #fff; border-right: 1px solid #cdd0d2; position: relative; overflow: hidden; padding: 1px 0 0 2px; }
.ditems { display: grid; grid-auto-rows: 1fr; height: 768px; align-items: center; }
.ditems a { width: 171px; height: 40px; line-height: 40px; padding-left: 18px; overflow: hidden; }
.ditems .on { background: #c1d9f3; }
.dthumb { position: absolute; right: 6px; top: 17px; width: 5px; height: 375px; border-radius: 3px; background: #e4e5e6; }
.dtablewrap { flex: 1; min-width: 0; background: #fff; border-left: 1px solid #c6c9cc; }
.dtable { width: 100%; table-layout: fixed; border-collapse: collapse; }
.c1 { width: 29px; }
.c2 { width: 429px; }
.dtable th, .dtable td { height: 35px; padding: 0 4px; border: 1px solid #cdd0d3; border-left: 0; font-weight: 400; white-space: nowrap; text-align: left; }
.dtable th { background: #efefef; text-align: center; padding: 0; }
.dtable thead th { height: 32px; border-top: 0; }
.dtable td:last-child, .dtable th:last-child { border-right: 0; }
.dtable .hl { background: #7fbaf8; color: #fff; font-weight: 700; }
.y { background: #fdfde0; }
.gr { background: #dbf5ea; position: relative; }
.dtable .cur th { background: #7fbaf8; color: #fff; font-weight: 700; }
.cur .y { box-shadow: inset 0 0 0 2px #67a5e8; }
.redbox { position: absolute; left: -18px; top: -5px; width: 238px; height: 52px; border: 4px solid #f91d12; border-radius: 4px; }
.dfoot { flex: none; padding-top: 10px; display: flex; gap: 10px; }
.dfoot button { width: 121px; height: 40px; border: 2px solid #d4d6d8; border-radius: 6px; background: #fff; }
.sizer { position: absolute; right: 3px; bottom: 3px; }

/* watermark */
.marks { position: absolute; inset: 142px 0 0 0; padding-left: 31px; display: grid; grid-template-columns: repeat(7, 327px); grid-auto-rows: 327px; overflow: hidden; pointer-events: none; font-size: 30px; color: rgba(140,145,165,.24); }
.marks span { width: 344px; height: 222px; line-height: 222px; text-align: center; transform: rotate(-45deg); white-space: nowrap; }

/* drawer handles */
.handle { position: absolute; display: flex; align-items: center; justify-content: center; background: #5c5c5c; }
.handle path { fill: none; stroke: #fff; stroke-width: 2; }
.in-left { left: 0; bottom: 166px; width: 55px; height: 42px; border-radius: 0 21px 21px 0; background: rgba(70,70,70,.7); }
.in-left svg { opacity: .5; }
.in-right { right: 0; top: 183px; width: 46px; height: 46px; border-radius: 23px 0 0 23px; padding-right: 4px; }
.out-left { left: 0; bottom: 53px; width: 53px; height: 42px; border-radius: 0 21px 21px 0; background: #666; padding-right: 5px; }
.out-right { right: -6px; top: 122px; width: 43px; height: 45px; border-radius: 23px 0 0 23px; padding-right: 4px; }
.handle.side { right: -6px; top: 705px; width: 22px; height: 54px; border-radius: 6px 0 0 6px; background: #b0b0b0; }
.float { position: absolute; right: 19px; bottom: 19px; display: flex; gap: 8px; color: #111; }
.float button { height: 41px; padding: 0 11px 0 13px; display: flex; align-items: center; gap: 8px; background: #fff; border-radius: 8px; box-shadow: 0 4px 14px rgba(0,0,0,.14); }
.float .sq { padding: 0 8px 0 9px; }

/* meeting footer */
.meeting-bottom { flex: none; height: 96px; border-top: 1px solid #e6e7f0; padding: 0 23px; display: grid; grid-template-columns: 1fr auto 1fr; align-items: start; font-size: 16px; line-height: 22px; color: #333949; }
.chat { display: flex; gap: 13px; padding-top: 18px; font-size: 18px; }
.say { width: 180px; height: 54px; background: #efeff0; border-radius: 12px; display: flex; align-items: center; gap: 9px; padding-left: 14px; }
.say input { width: 110px; border: 0; background: none; padding: 0; outline: 0; }
.say input::placeholder { color: #747b8c; opacity: 1; }
.hand { width: 53px; height: 54px; background: #efeff0; border-radius: 12px; display: flex; align-items: center; justify-content: center; }
.mtools { display: flex; padding: 20px 0 0 22px; }
.mtools button, .leave { display: flex; flex-direction: column; align-items: center; gap: 3px; }
.mtools svg, .leave svg { width: 34px; height: 30px; }
.w1 { width: 66px; }
.w2 { width: 94px; }
.w3 { width: 90px; }
.w4 { width: 98px; }
.caret { width: 42px; height: 30px; padding-left: 5px; display: flex; align-items: flex-end; }
.caret.last { width: 20px; }
.caret::before { content: ""; flex: none; width: 7px; height: 7px; border: solid #444a58; border-width: 2px 0 0 2px; transform: rotate(45deg); }
.leave { justify-self: end; margin-top: 20px; padding-right: 13px; color: #e04a30; }
.desk { flex: none; height: 12px; border-top: 3px solid #b2b6b8; background: linear-gradient(90deg, #dfe2e6, #ecdfd8 35%, #e3e3e4 60%, #d9dfe5); }
```
